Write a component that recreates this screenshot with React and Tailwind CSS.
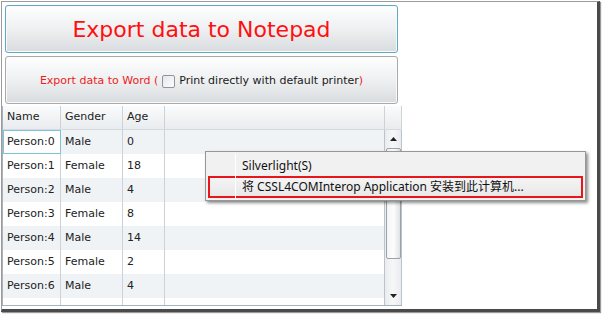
import React from 'react';

const people = [
  { name: 'Person:0', gender: 'Male', age: 0 },
  { name: 'Person:1', gender: 'Female', age: 18 },
  { name: 'Person:2', gender: 'Male', age: 4 },
  { name: 'Person:3', gender: 'Female', age: 8 },
  { name: 'Person:4', gender: 'Male', age: 14 },
  { name: 'Person:5', gender: 'Female', age: 2 },
  { name: 'Person:6', gender: 'Male', age: 4 },
];

function Arrow({ down }) {
  return (
    <svg width="7" height="4" viewBox="0 0 7 4">
      <path d={down ? 'M0 0H7L3.5 4Z' : 'M0 4H7L3.5 0Z'} fill="#222" />
    </svg>
  );
}

export default function App() {
  return (
    <div className="w-[603px] h-[316px] bg-white font-['DejaVu_Sans',sans-serif] overflow-hidden">
      <div className="relative ml-px mt-px w-[599px] h-[311px] bg-white border-l border-t border-[#9b9b9b] border-r-[3px] border-b-[3px] border-r-[#4a4a4a] border-b-[#4a4a4a] shadow-[1px_1px_1px_#999]">
        {/* Buttons */}
        <div className="pt-[3px] pl-[3px] w-[396px] flex flex-col gap-[3px]">
          <button className="h-[48px] w-[393px] rounded-[3px] border border-[#5fa9c4] bg-gradient-to-b from-[#fefefe] via-[#eef0f1] to-[#d9dcdf] text-[22px] text-[#ff1010] shadow-[inset_0_0_0_1px_#f8fbfc]">
            Export data to Notepad
          </button>
          <button className="h-[48px] w-[393px] rounded-[3px] border border-[#a9a9a9] bg-gradient-to-b from-[#fefefe] via-[#eef0f1] to-[#d9dcdf] text-[11px] flex items-center justify-center pt-[3px] shadow-[inset_0_0_0_1px_#fafafa]">
            <span className="text-[#ee1c1c]">Export data to Word (</span>
            <span className="mx-[4px] w-[13px] h-[13px] rounded-[2px] border border-[#8e959c] bg-gradient-to-br from-[#e4e7ea] to-[#fdfdfd]" />
            <span className="text-[#1a1a1a]">Print directly with default printer</span>
            <span className="text-[#ee1c1c]">)</span>
          </button>
        </div>

        {/* Grid */}
        <div className="mt-[2px] w-[400px] h-[200px] border-l border-b border-[#a8b2bb] text-[11px] text-[#222] flex flex-col relative">
          <div className="flex h-[24px] bg-gradient-to-b from-[#fafbfc] to-[#e9ecef] border-b border-[#d5dade]">
            <div className="w-[58px] border-r border-[#cdd2d7] pl-[4px] flex items-center">Name</div>
            <div className="w-[62px] border-r border-[#cdd2d7] pl-[4px] flex items-center">Gender</div>
            <div className="w-[42px] border-r border-[#cdd2d7] pl-[4px] flex items-center">Age</div>
            <div className="flex-1 border-r border-[#cdd2d7]" />
            <div className="w-[17px] border-r border-[#cdd2d7]" />
          </div>
          <div className="flex flex-1">
            <div className="w-[381px] flex flex-col">
              {people.map((p, i) => (
                <div key={p.name} className={`flex h-[24px] ${i % 2 === 0 ? 'bg-[#f0f3f6]' : 'bg-white'}`}>
                  <div className={`w-[58px] border-r border-[#cdd2d7] pl-[4px] flex items-center ${i === 0 ? 'outline outline-1 outline-[#7ec4d6] -outline-offset-1 bg-white' : ''}`}>{p.name}</div>
                  <div className="w-[62px] border-r border-[#cdd2d7] pl-[4px] flex items-center">{p.gender}</div>
                  <div className="w-[42px] border-r border-[#cdd2d7] pl-[4px] flex items-center">{p.age}</div>
                  <div className="flex-1" />
                </div>
              ))}
              <div className="flex flex-1">
                <div className="w-[58px] border-r border-[#cdd2d7]" />
                <div className="w-[62px] border-r border-[#cdd2d7]" />
                <div className="w-[42px] border-r border-[#cdd2d7]" />
              </div>
            </div>
            {/* Scrollbar */}
            <div className="w-[18px] border-l border-r border-[#bcc3ca] bg-gradient-to-r from-[#e9ecef] via-[#f6f7f8] to-[#e9ecef] flex flex-col items-center">
              <div className="h-[18px] flex items-center justify-center"><Arrow /></div>
              <div className="w-[15px] h-[111px] rounded-[2px] border border-[#9aa3ab] bg-gradient-to-r from-[#f3f4f5] via-[#fdfdfd] to-[#dfe2e5]" />
              <div className="flex-1" />
              <div className="h-[16px] flex items-center justify-center mb-[1px]"><Arrow down /></div>
            </div>
          </div>
        </div>

        {/* Context menu */}
        <div className="absolute left-[203px] top-[149px] w-[381px] h-[50px] bg-[#f1f1f1] border border-[#979797] shadow-[2px_2px_3px_rgba(0,0,0,0.45)] font-['Noto_Sans','Noto_Sans_CJK_SC',sans-serif] text-[12px] text-[#111] flex flex-col py-[2px] px-[2px]">
          <div className="absolute left-[29px] top-[2px] bottom-[2px] w-px bg-[#e0e0e0] border-r border-white" />
          <div className="h-[22px] flex items-center pl-[34px] pt-[1px]">Silverlight(S)</div>
          <div className="h-[22px] flex items-center pl-[32px] border-2 border-[#e8161a] bg-gradient-to-b from-[#f4f4f4] to-[#e8e8e8]">
            将 CSSL4COMInterop Application 安装到此计算机...
          </div>
        </div>
      </div>
    </div>
  );
}
